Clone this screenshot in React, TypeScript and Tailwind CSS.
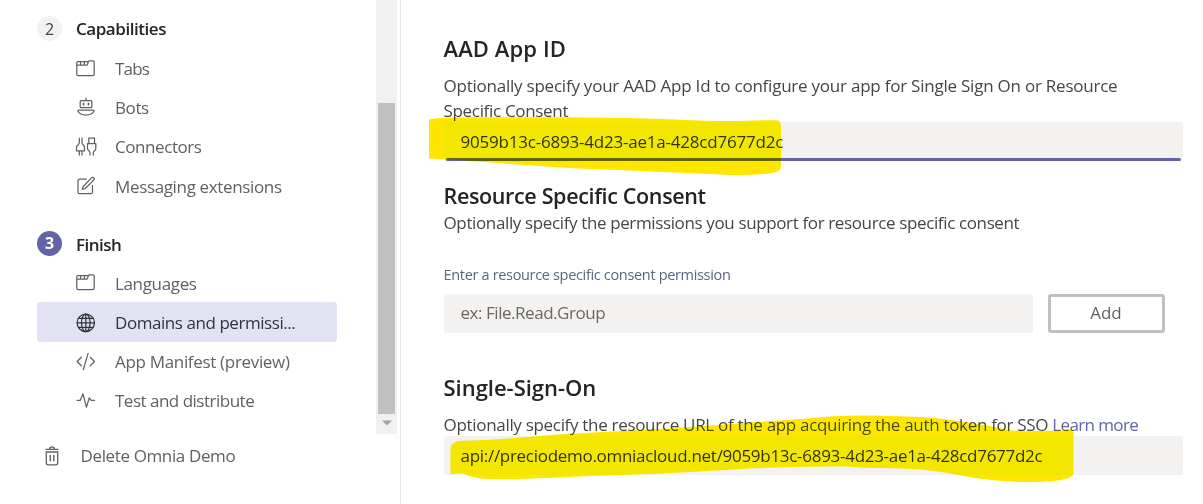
import React from "react";

type IconProps = { children: React.ReactNode; className?: string };

const Icon = ({ children, className = "" }: IconProps) => (
  <svg
    viewBox="0 0 20 20"
    className={`h-5 w-5 shrink-0 overflow-visible ${className}`}
    fill="none"
    stroke="currentColor"
    strokeWidth="1.25"
    strokeLinecap="round"
    strokeLinejoin="round"
  >
    {children}
  </svg>
);

const TabsIcon = () => (
  <Icon>
    <path d="M.8 4v11.2c0 .9.6 1.4 1.4 1.4h14.6c.8 0 1.4-.5 1.4-1.4V3.300c0-.9-.5-1.4-1.300-1.400h-3.200c-.8 0-1.200.4-1.500 1.100l-.6 2.200c-.2.6-.6.9-1.200.9H.8M.8 4c0-.8.4-1.300 1.200-1.300h10.200M4.600 2.800v3.100M8.400 2.800v3.100" />
  </Icon>
);

const BotsIcon = () => (
  <Icon>
    <path d="M10 .3v2.3M5.200 2.700h9.600c.6 0 1 .4 1 1v5c0 .6-.4 1-1 1H5.200c-.6 0-1-.4-1-1v-5c0-.6.4-1 1-1zM3 12.100h14c1 0 1.400.5 1 1.200-1.200 2.400-4.400 3.700-8 3.700s-6.800-1.300-8-3.700c-.4-.7 0-1.200 1-1.200z" />
    <path d="M7.500 5.400v1.300M12.500 5.400v1.300" strokeWidth="1.700" />
  </Icon>
);

const ConnectorsIcon = () => (
  <Icon>
    <path d="M3.300 1v4.800C3.300 8 .5 8 .5 10.300v3.500h8v-3.500C8.500 8 6 8 6 5.800V1M3.300 14v4M6 14v4M12.800 1h5.700v5.500h-5.700zM12.800 6.500h-1.300v5c0 2.200 2.500 2.200 2.500 4.300V18M18.500 6.500h1.300v5c0 2.200-2.500 2.200-2.500 4.300V18" />
  </Icon>
);

const EditIcon = () => (
  <Icon>
    <path d="M10.200 3.200H3.500C2.600 3.200 2 3.800 2 4.700v11.500c0 .9.600 1.500 1.500 1.500H15c.9 0 1.500-.6 1.500-1.500V9.500M7.200 10.500l8.300-8.600c.8-.8 1.700-.7 2.300-.1.600.6.700 1.500-.1 2.300l-8.500 8.400-2.800.8z" />
  </Icon>
);

const GlobeIcon = () => (
  <Icon>
    <circle cx="9.800" cy="9.800" r="8.700" />
    <ellipse cx="9.800" cy="9.800" rx="4.300" ry="8.700" />
    <path d="M9.800 1.100v17.400M1.100 9.800h17.400M2.300 5.300h15M2.300 14.300h15" />
  </Icon>
);

const CodeIcon = () => (
  <Icon>
    <path d="M5.300 5.200L1.100 9.500l4.200 4.300M14.300 5.200l4.200 4.300-4.200 4.300M12.100 1.400L7.300 17.700" />
  </Icon>
);

const PulseIcon = () => (
  <Icon>
    <path d="M1 9.300h3.300L7 2.800l3.400 13.400L13.300 6.800l1.900 2.500h3.300" />
  </Icon>
);

const TrashIcon = () => (
  <svg
    viewBox="0 0 14 20"
    className="h-5 w-3.5 shrink-0 overflow-visible"
    fill="none"
    stroke="currentColor"
    strokeWidth="1.300"
    strokeLinecap="round"
  >
    <path d="M1 3.300h12M4.700 3.100c0-1.500.8-2.200 2.300-2.200s2.300.7 2.300 2.200M1.300 6v10.800c0 1.200.7 2 1.900 2h7.600c1.200 0 1.900-.8 1.900-2V6z" />
    <path d="M5.300 9.500v5.200M8.800 9.500v5.200" strokeWidth="1.400" />
  </svg>
);

type RowProps = { icon: React.ReactNode; label: string; spacing: string; active?: boolean };

const NavRow = ({ icon, label, spacing, active = false }: RowProps) => (
  <li
    className={`flex h-[39.25px] w-[300px] items-center gap-[19.5px] rounded-[3px] pl-[38.5px] pt-[1.5px] text-[17px] ${
      active ? "bg-[#e2e2f2] text-[#33333b]" : "text-[#616161]"
    }`}
  >
    {icon}
    <span className={`whitespace-nowrap ${spacing}`}>{label}</span>
  </li>
);

type StepProps = { number: string; label: string; spacing: string; current?: boolean };

const StepHeader = ({ number, label, spacing, current = false }: StepProps) => (
  <div className="flex h-[39.25px] items-center gap-[14px] text-[17px] font-semibold text-[#242424]">
    <span
      className={`flex h-[25px] w-[25px] items-center justify-center rounded-full text-[16px] leading-none ${
        current ? "bg-[#6264a7] font-bold text-white" : "bg-[#f3f2f1] font-normal text-[#484644]"
      }`}
    >
      {number}
    </span>
    <span className={`whitespace-nowrap ${current ? "pt-[2px]" : ""} ${spacing}`}>{label}</span>
  </div>
);

const Sidebar = () => (
  <nav className="flex w-[376px] shrink-0 flex-col pl-[37px] pt-[9px]">
    <StepHeader number="2" label="Capabilities" spacing="tracking-[-0.45px]" />
    <ul>
      <NavRow icon={<TabsIcon />} label="Tabs" spacing="tracking-[-0.8px]" />
      <NavRow icon={<BotsIcon />} label="Bots" spacing="tracking-[-0.4px]" />
      <NavRow icon={<ConnectorsIcon />} label="Connectors" spacing="tracking-[-0.43px]" />
      <NavRow icon={<EditIcon />} label="Messaging extensions" spacing="tracking-[-0.35px]" />
    </ul>
    <div className="mt-[18.5px]">
      <StepHeader number="3" label="Finish" spacing="tracking-[-0.5px]" current />
      <ul>
        <NavRow icon={<TabsIcon />} label="Languages" spacing="tracking-[-0.35px]" />
        <NavRow icon={<GlobeIcon />} label="Domains and permissi..." spacing="tracking-[-0.44px]" active />
        <NavRow icon={<CodeIcon />} label="App Manifest (preview)" spacing="tracking-[-0.32px]" />
        <NavRow icon={<PulseIcon />} label="Test and distribute" spacing="tracking-[-0.5px]" />
      </ul>
    </div>
    <div className="mt-[16.5px] flex h-[39px] items-center gap-[22px] pl-[7.5px] text-[17px] text-[#616161]">
      <TrashIcon />
      <span className="whitespace-nowrap tracking-[-0.37px]">Delete Omnia Demo</span>
    </div>
  </nav>
);

const Scrollbar = () => (
  <div className="flex h-[434px] w-[21px] shrink-0 flex-col items-center bg-[#f1f1f1] pt-[103px]">
    <div className="h-[311px] w-[17px] bg-[#c1c1c1]" />
    <svg viewBox="0 0 10 6" className="mt-[6px] h-[6px] w-[10px]">
      <path d="M0 .5h10L5 5.500z" fill="#a3a3a3" />
    </svg>
  </div>
);

const Highlights = () => (
  <svg
    viewBox="0 0 1203 504"
    className="pointer-events-none absolute inset-0 h-[504px] w-[1203px] mix-blend-darken"
    fill="#ffe600"
  >
    <path d="M429 119.500C436 118 443 117.700 452 117.500C510 117 580 117 630 118C670 119 700 121.500 740 121C755 120.500 768 120 777 120.300C780 120.800 781 123 781 128V166C781 170 778 172 772 173C755 175.500 738 175.300 720 174.500C660 171.500 610 170 560 167.500C520 165 485 162 450 159.500L429 158.500z" />
    <path d="M450.500 474V448C451.500 443 455 441 462 440.700C480 440 500 439.500 520 437.500C560 433.500 600 432.500 650 429.500C710 426 750 422.500 800 419C830 416 850 415 875 415.500C895 416.500 915 416.500 935 418C960 420.500 985 425 1012 430.500C1030 431.800 1050 431 1073.500 429.500V473C1073.500 477 1067 479 1058 480.500C1030 483.500 1000 481.500 975 478C955 474.500 940 471 920 469.500C895 467.500 870 469 848 466.500C820 466.500 780 467 750 468.500C700 471.500 640 475 590 476C550 478 510 480 480 478.500C473 477.500 468 475.500 463 473.500z" />
  </svg>
);

const body = "text-[17px] leading-[24.5px] text-[#484644] whitespace-nowrap";
const heading = "font-semibold leading-[30px] text-[#242424] whitespace-nowrap";

const Main = () => (
  <main className="flex min-w-0 flex-1 flex-col pl-[42.5px] pt-[33px]">
    <section>
      <h2 className={`${heading} text-[22px] tracking-[0.1px]`}>AAD App ID</h2>
      <p className={`${body} mt-[11px] tracking-[-0.23px]`}>
        Optionally specify your AAD App Id to configure your app for Single Sign On or Resource
        <br />
        <span className="tracking-[-0.32px]">Specific Consent</span>
      </p>
      <div className="-mt-px flex h-[39px] w-[739px] items-center rounded-[3px] bg-[#f3f2f1] pl-[17px] text-[17px] text-[#33312f]">
        <span className="whitespace-nowrap tracking-[-0.21px]">9059b13c-6893-4d23-ae1a-428cd7677d2c</span>
      </div>
      <div className="-mt-[3px] ml-[2px] h-[3px] w-[735px] rounded-full bg-[#6264a7]" />
    </section>

    <section className="mt-[20px]">
      <h2 className={`${heading} text-[21.5px] tracking-[-0.35px]`}>Resource Specific Consent</h2>
      <p className={`${body} tracking-[-0.37px]`}>
        Optionally specify the permissions you support for resource specific consent
      </p>
      <label className="mt-[29px] block whitespace-nowrap text-[14.5px] leading-5 tracking-[-0.33px] text-[#5b6680]">
        Enter a resource specific consent permission
      </label>
      <div className="mt-[9px] flex gap-[15px]">
        <div className="flex h-[39px] w-[589px] items-center rounded-[3px] bg-[#f3f2f1] pl-[17px] text-[17px] text-[#6b6966]">
          <span className="whitespace-nowrap tracking-[-0.46px]">ex: File.Read.Group</span>
        </div>
        <button className="flex h-[39px] w-[117px] items-center justify-center rounded-[3px] border-[3px] border-[#c0c0c0] bg-white text-[17px] text-[#616161]">
          Add
        </button>
      </div>
    </section>

    <section className="mt-[39px]">
      <h2 className={`${heading} text-[22px] tracking-[-0.02px]`}>Single-Sign-On</h2>
      <p className={`${body} mt-[11px] flex gap-[4px]`}>
        <span className="tracking-[-0.31px]">
          Optionally specify the resource URL of the app acquiring the auth token for SSO
        </span>
        <a className="tracking-[-0.6px] text-[#6264a7]">Learn more</a>
      </p>
      <div className="-mt-px flex h-[39px] w-[739px] items-center rounded-[3px] bg-[#f3f2f1] pl-[17px] text-[17px] text-[#33312f]">
        <span className="whitespace-nowrap tracking-[-0.29px]">
          api://preciodemo.omniacloud.net/9059b13c-6893-4d23-ae1a-428cd7677d2c
        </span>
      </div>
    </section>
  </main>
);

export default function App() {
  return (
    <div className="relative flex h-[504px] w-[1203px] overflow-hidden bg-white font-['Open_Sans',sans-serif]">
      <Sidebar />
      <Scrollbar />
      <div className="ml-[3px] w-px shrink-0 bg-[#e8e8e8]" />
      <Main />
      <Highlights />
    </div>
  );
}
